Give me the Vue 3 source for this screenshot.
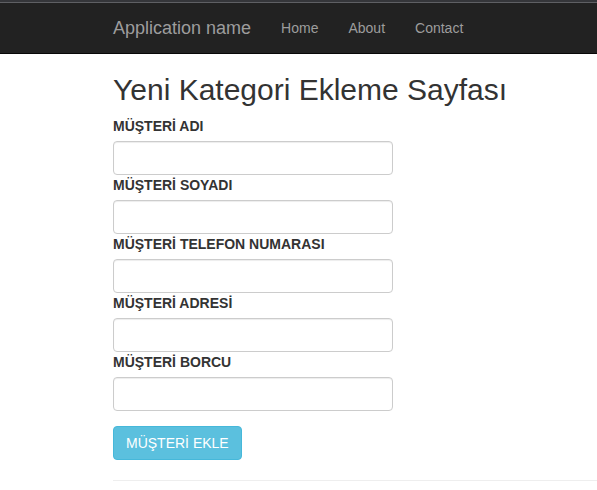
<script setup>
const links = ['Home', 'About', 'Contact']
const fields = [
  { id: 'ad', label: 'MÜŞTERİ ADI' },
  { id: 'soyad', label: 'MÜŞTERİ SOYADI' },
  { id: 'telefon', label: 'MÜŞTERİ TELEFON NUMARASI' },
  { id: 'adres', label: 'MÜŞTERİ ADRESİ' },
  { id: 'borc', label: 'MÜŞTERİ BORCU' }
]
</script>

<template>
  <div class="page">
    <div class="strip"></div>
    <header class="navbar">
      <nav class="nav">
        <a class="brand" href="#">Application name</a>
        <a v-for="link in links" :key="link" href="#">{{ link }}</a>
      </nav>
    </header>
    <main class="content">
      <h2 class="title">Yeni Kategori Ekleme Sayfası</h2>
      <form @submit.prevent>
        <div v-for="field in fields" :key="field.id" class="field">
          <label :for="field.id">{{ field.label }}</label>
          <input :id="field.id" type="text" />
        </div>
        <button class="submit" type="submit">MÜŞTERİ EKLE</button>
      </form>
      <hr class="rule" />
    </main>
  </div>
</template>

<style>
body {
  margin: 0;
  background: #fff;
}
</style>

<style scoped>
.page {
  font: 14px/20px "Liberation Sans", Arial, sans-serif;
  color: #333;
}
.page * {
  box-sizing: border-box;
}
.strip {
  height: 3px;
  background: #35363a;
  border-bottom: 1px solid #5f6064;
}
.navbar {
  padding-left: 98px;
  background: #222;
  border-bottom: 1px solid #080808;
}
.nav {
  display: flex;
}
.nav a {
  padding: 15px;
  color: #9d9d9d;
  text-decoration: none;
}
.nav .brand {
  font-size: 18px;
}
.content {
  padding-left: 113px;
}
.title {
  margin: 0;
  padding: 19px 0 10px;
  font-size: 30px;
  line-height: 33px;
  font-weight: 400;
}
.field label {
  display: block;
  margin-bottom: 5px;
  font-weight: 700;
}
.field input {
  display: block;
  width: 280px;
  max-width: 100%;
  height: 34px;
  padding: 6px 12px;
  font: inherit;
  color: #555;
  border: 1px solid #ccc;
  border-radius: 4px;
  box-shadow: inset 0 1px 1px rgba(0, 0, 0, 0.075);
}
.submit {
  margin-top: 15px;
  padding: 6px 12px;
  font: inherit;
  color: #fff;
  background: #5bc0de;
  border: 1px solid #46b8da;
  border-radius: 4px;
}
.rule {
  margin: 20px 0;
  border: 0;
  border-top: 1px solid #eee;
}
</style>
